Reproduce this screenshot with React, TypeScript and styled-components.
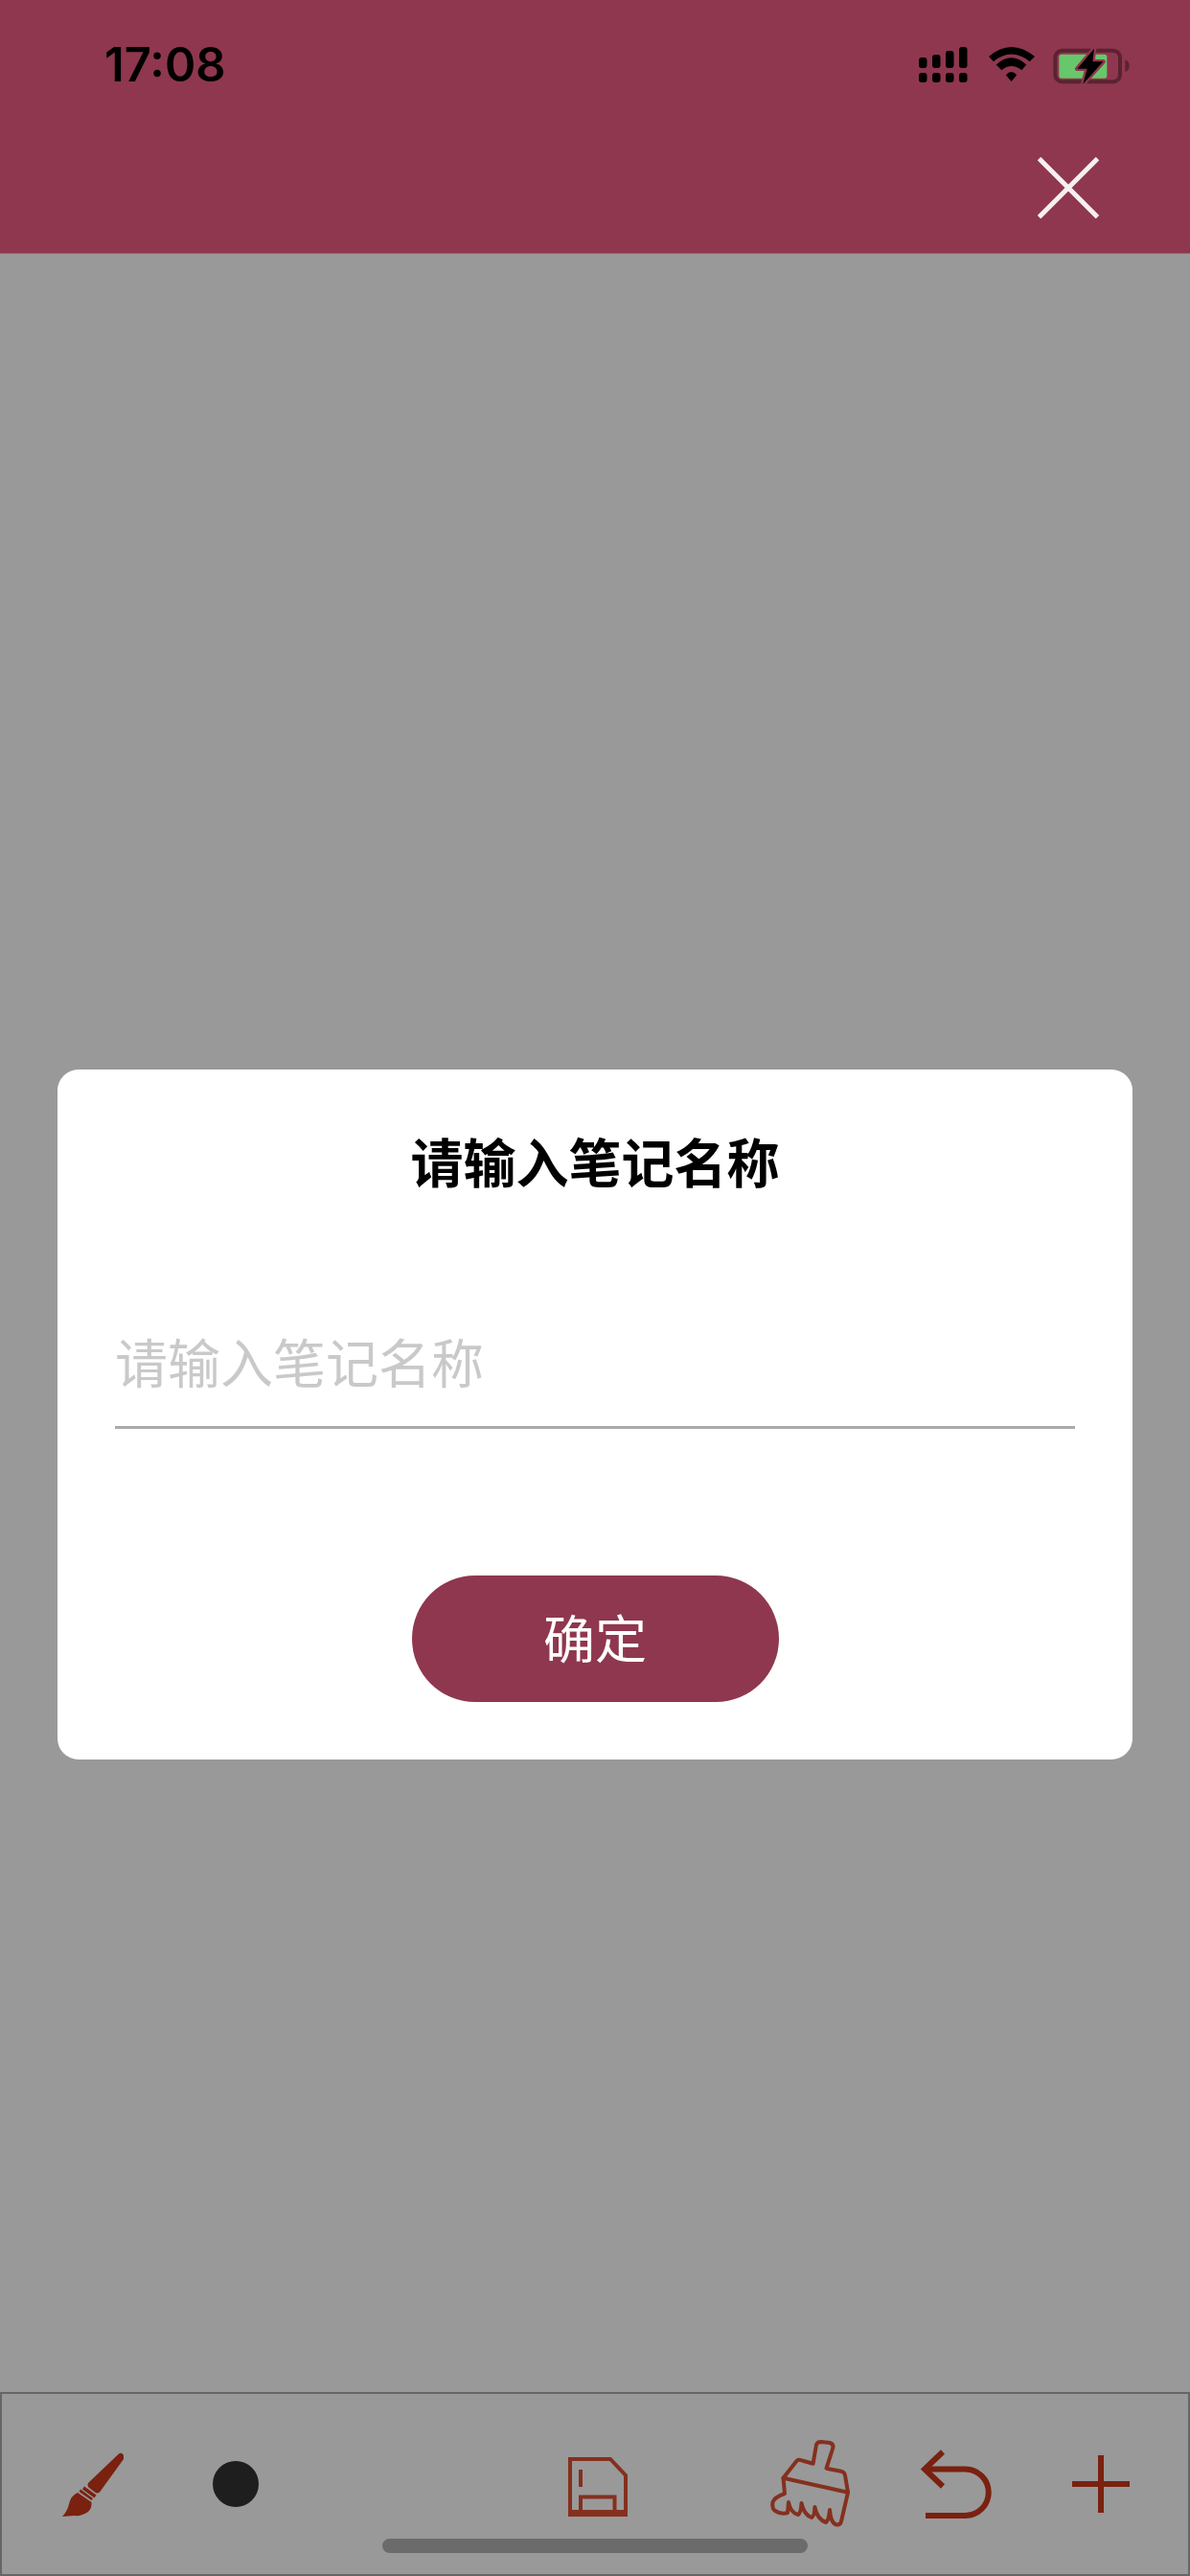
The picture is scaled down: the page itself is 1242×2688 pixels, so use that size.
import React from "react";
import styled, { createGlobalStyle } from "styled-components";

const BRICK = "#7a2110";

export default function App() {
  return (
    <Page>
      <GlobalStyle />
      <Header>
        <StatusBar>
          <Time>17:08</Time>
          <StatusIcons>
            <SignalIcon />
            <WifiIcon />
            <BatteryIcon />
          </StatusIcons>
        </StatusBar>
        <CloseRow>
          <CloseButton aria-label="close">
            <svg width="64" height="64" viewBox="0 0 64 64">
              <path d="M1.5 1.5 L62.5 62.5 M62.5 1.5 L1.5 62.5" stroke="#fff" strokeOpacity="0.92" strokeWidth="5" fill="none" />
            </svg>
          </CloseButton>
        </CloseRow>
      </Header>

      <Body>
        <Dialog>
          <Title>请输入笔记名称</Title>
          <NameInput placeholder="请输入笔记名称" />
          <ConfirmButton>确定</ConfirmButton>
        </Dialog>
      </Body>

      <Toolbar>
        <Tool $gap={63}>
          <BrushIcon />
        </Tool>
        <Tool $gap={93}>
          <ColorDot />
        </Tool>
        <Tool $gap={323}>
          <SaveIcon />
        </Tool>
        <Tool $gap={149}>
          <BroomIcon />
        </Tool>
        <Tool $gap={73}>
          <UndoIcon />
        </Tool>
        <Tool $gap={84}>
          <PlusIcon />
        </Tool>
        <HomeIndicator />
      </Toolbar>
    </Page>
  );
}

function SignalIcon() {
  return (
    <svg width="51" height="37" viewBox="0 0 51 37">
      <rect x="0" y="11" width="8.5" height="11" rx="3" />
      <rect x="14" y="8" width="8.5" height="14" rx="3" />
      <rect x="28" y="4" width="8.5" height="18" rx="3" />
      <rect x="42" y="0" width="8.5" height="22" rx="3" />
      <rect x="0" y="27" width="8.5" height="10" rx="3" />
      <rect x="14" y="27" width="8.5" height="10" rx="3" />
      <rect x="28" y="27" width="8.5" height="10" rx="3" />
      <rect x="42" y="27" width="8.5" height="10" rx="3" />
    </svg>
  );
}

function WifiIcon() {
  return (
    <WifiSvg width="48" height="36" viewBox="335 88 143 107">
      <path d="M335 118 Q405 58 478 118 L462 133 Q405 88 350 133 Z" />
      <path d="M358 143 Q405 100 452 143 L437 160 Q405 135 375 160 Z" />
      <path d="M388 175 Q405 155 422 175 L405 195 Z" />
    </WifiSvg>
  );
}

function BatteryIcon() {
  return (
    <svg width="80" height="40" viewBox="537 82 238 120">
      <rect x="543" y="93" width="203" height="98" rx="22" fill="none" stroke="#5b2233" strokeWidth="12" />
      <path d="M762 122 Q775 128 775 141 Q775 154 762 160 Z" fill="#5b2233" />
      <rect x="555" y="105" width="150" height="75" rx="8" fill="#67c76a" />
      <path
        d="M665 87 L612 150 H643 L630 198 L693 128 H660 Z"
        fill="#000"
        stroke="#8f374e"
        strokeWidth="14"
        paintOrder="stroke"
        strokeLinejoin="round"
      />
    </svg>
  );
}

function BrushIcon() {
  return (
    <svg width="64" height="67" viewBox="0 0 64 67" fill={BRICK}>
      <path d="M59 1.5 Q62 -0.5 64 3 L64 7 L39 41.5 Q36.5 43.5 34 41.5 L27.5 36.5 Q25.5 34 27.5 31.5 Z" />
      <path d="M23 35.5 L35.5 44.5 L33.5 47.5 L21 38.5 Z" />
      <path d="M19 38.5 L32 48 L30.5 50 L17.5 41 Z" />
      <path d="M16 42 L30.5 52 Q31 58 27 62 Q20 67 12 66 L0 67 Q5 62 7 54 Q9 45 16 42 Z" />
    </svg>
  );
}

function SaveIcon() {
  return (
    <SaveSvg width="62" height="62" viewBox="0 0 62 62" fill="none" stroke="#85301f" strokeWidth="4">
      <path d="M2 2 H44 L60 19 V60 H2 Z" />
      <path d="M13 13 V31" />
      <path d="M13 60 V41.5 H48.5 V60" />
      <path d="M2 57 H60" />
    </SaveSvg>
  );
}

function BroomIcon() {
  return (
    <svg width="84" height="92" viewBox="0 0 84 92" fill="none" stroke="#85301f" strokeWidth="4" strokeLinejoin="round" strokeLinecap="round">
      <path d="M44.6 24.7 L48 5 Q49 2 53 2 L62 3 Q66 4 65.4 8 L58.5 29.7 L75 33 Q77.5 34 78 37 L81 54.7 L13.5 39.7 L27.4 22 Q29 20 33 21.5 Z" />
      <path d="M13.5 39.7 L15 56 Q4 60 2.5 65 Q1.5 72 5 74 Q11 78 18 76 L19 65 Q21 76 29 78 Q32 76 32.5 66 Q35 78 43 81 Q46 80 46.4 70 Q49 83 58 86 Q61 84 62 73 Q63 87 69 88.5 Q73 89 74 85 L81 54.7" />
    </svg>
  );
}

function UndoIcon() {
  return (
    <svg width="74" height="72" viewBox="0 0 74 72" fill="none" stroke={BRICK} strokeWidth="6">
      <path d="M23 2.5 L4 20.5 L23 38.5" />
      <path d="M4 20.5 H46.5 A24.25 24.25 0 0 1 46.5 69 H5" />
    </svg>
  );
}

function PlusIcon() {
  return (
    <svg width="60" height="60" viewBox="0 0 60 60" stroke={BRICK} strokeWidth="6">
      <path d="M30 0 V60 M0 30 H60" />
    </svg>
  );
}

const GlobalStyle = createGlobalStyle`
  html, body {
    margin: 0;
    padding: 0;
    background: #999;
  }
  * {
    box-sizing: border-box;
  }
`;

const Page = styled.div`
  width: 1242px;
  height: 2688px;
  display: flex;
  flex-direction: column;
  background: #999;
  font-family: "Noto Sans CJK SC", "Noto Sans", sans-serif;
`;

const Header = styled.header`
  height: 265px;
  background: #8f374e;
  border-bottom: 1px solid #777;
  display: flex;
  flex-direction: column;
`;

const StatusBar = styled.div`
  height: 135px;
  padding: 49px 63px 0 109px;
  display: flex;
  justify-content: space-between;
  align-items: flex-start;
`;

const Time = styled.span`
  font-family: Inter, sans-serif;
  font-weight: 600;
  font-size: 49px;
  line-height: 38px;
  color: #000;
`;

const StatusIcons = styled.div`
  display: flex;
  align-items: flex-start;
  gap: 22px;
`;

const WifiSvg = styled.svg`
  margin-right: -3px;
`;

const CloseRow = styled.div`
  display: flex;
  justify-content: flex-end;
  padding: 29px 95px 0 0;
`;

const CloseButton = styled.button`
  width: 64px;
  height: 64px;
  padding: 0;
  border: 0;
  background: transparent;
  display: block;
  svg {
    display: block;
  }
`;

const Body = styled.main`
  flex: 1;
  padding: 851px 60px 0;
`;

const Dialog = styled.section`
  height: 720px;
  background: #fff;
  border-radius: 22px;
  padding: 58px 60px 0;
  display: flex;
  flex-direction: column;
`;

const Title = styled.h2`
  margin: 0;
  font-size: 55px;
  line-height: 72px;
  font-weight: 700;
  text-align: center;
  color: #000;
`;

const NameInput = styled.input`
  margin-top: 130px;
  height: 115px;
  padding: 0 0 26px;
  border: 0;
  border-bottom: 3px solid #aaa;
  border-radius: 0;
  outline: none;
  background: transparent;
  font-family: inherit;
  font-size: 55px;
  &::placeholder {
    color: #c9c9c9;
    opacity: 1;
  }
`;

const ConfirmButton = styled.button`
  margin: 153px auto 0;
  width: 383px;
  height: 132px;
  padding: 0 0 6px;
  border: 0;
  border-radius: 66px;
  background: #8f374e;
  color: #fff;
  font-family: inherit;
  font-size: 54px;
`;

const Toolbar = styled.footer`
  position: relative;
  height: 192px;
  border: 2px solid #666;
  display: flex;
  align-items: center;
`;

const Tool = styled.div<{ $gap: number }>`
  margin-left: ${(p) => p.$gap}px;
  display: flex;
  svg {
    display: block;
  }
`;

const ColorDot = styled.div`
  width: 48px;
  height: 48px;
  border-radius: 50%;
  background: #1e1e1e;
`;

const SaveSvg = styled.svg`
  margin-top: 5px;
`;

const HomeIndicator = styled.div`
  position: absolute;
  left: 397px;
  bottom: 22px;
  width: 444px;
  height: 15px;
  border-radius: 8px;
  background: #6b6b6b;
`;
